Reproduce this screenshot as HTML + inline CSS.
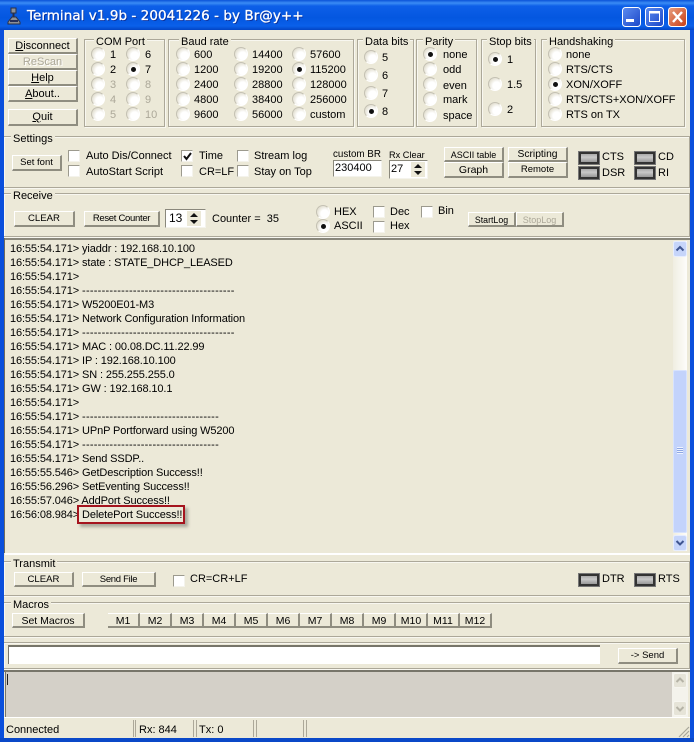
<!DOCTYPE html>
<html><head><meta charset="utf-8"><style>
html,body{margin:0;padding:0;background:#ece9d8}
#w{position:relative;width:694px;height:742px;overflow:hidden;background:#ece9d8;font:11px/14px "Liberation Sans",sans-serif;color:#000}
#w div,#w span{position:absolute;white-space:pre}
#w span{margin-top:1px}
.g{border:1px solid #aca899;box-shadow:inset 1px 1px 0 #f8f7f0,1px 1px 0 #f8f7f0}
.l{background:#ece9d8;padding:0 2px;line-height:12px;margin:1px 0 0 1px}
.b{background:#ece9d8;border-top:1px solid #fff;border-left:1px solid #fff;border-right:2px solid #8f8d80;border-bottom:2px solid #8f8d80;text-align:center;box-sizing:border-box;font-size:11px;line-height:12px;padding-top:1px}
.r{width:12px;height:12px;border-radius:50%;background:radial-gradient(circle at 65% 65%,#fff 35%,#e6e3d6 70%);border:1px solid #c4c1b3;border-bottom-color:#fff;border-right-color:#fff;margin:-7px 0 0 -7px}
.c:after{content:"";position:absolute;left:3.500px;top:3.500px;width:5px;height:5px;border-radius:50%;background:#111}
.x{width:10px;height:10px;background:#fff;border:1px solid #9c9a8e;border-bottom-color:#f4f3ec;border-right-color:#f4f3ec}
.d{color:#aca899}
.led{width:16px;height:8px;border:2px solid #333;outline:1px solid #777;background:linear-gradient(#aaa,#c9c9c9 40%,#999)}
.m{background:#ece9d8;border-top:1px solid #fff;border-right:2px solid #8f8d80;border-bottom:2px solid #8f8d80;box-sizing:border-box;text-align:center;top:613px;height:15px;width:32px;line-height:13px;font-size:10.5px;padding-top:1px}
.log{left:10px;letter-spacing:-.12px;margin-top:1px}
em{font-style:normal;letter-spacing:.25px}
</style></head><body><div id="w">

<!-- title -->
<div style="left:0;top:0;width:694px;height:30px;background:linear-gradient(#0a52d8 0,#3a8cf5 3px,#0d5fe8 6px,#0457e0 18px,#0a60ea 26px,#0344c4 30px)"></div>

<svg style="position:absolute;left:6px;top:6px" width="16" height="19" viewBox="0 0 16 19"><path d="M5 2h5v5H8v4h2l4 5v2H2v-2l4-5h1V7H5z" fill="#8c9098" stroke="#2a2f45"/><rect x="4" y="14" width="8" height="2" fill="#27305a"/></svg>
<div style="left:27px;top:7px;color:#fff;font:13.5px/18px 'DejaVu Sans',sans-serif;letter-spacing:.05px;-webkit-text-stroke:.3px #fff;text-shadow:1px 1px 0 #0a2f9a">Terminal v1.9b - 20041226 - by Br@y++</div>

<svg style="position:absolute;left:621px;top:6px" width="68" height="22" viewBox="0 0 68 22">
<defs><linearGradient id="a" x1="0" y1="0" x2="1" y2="1"><stop offset="0" stop-color="#5c8cf0"/><stop offset="1" stop-color="#1b47c8"/></linearGradient><linearGradient id="e" x1="0" y1="0" x2="1" y2="1"><stop offset="0" stop-color="#e8a080"/><stop offset="1" stop-color="#c83c14"/></linearGradient></defs>
<rect x="1.500" y="1.500" width="18" height="19" rx="3" fill="url(#a)" stroke="#fff"/><rect x="5" y="13" width="8" height="3" fill="#fff"/>
<rect x="24.500" y="1.500" width="18" height="19" rx="3" fill="url(#a)" stroke="#fff"/><rect x="28.500" y="5.500" width="10" height="10" fill="none" stroke="#fff"/><rect x="28" y="5" width="11" height="2.500" fill="#fff"/>
<rect x="47.500" y="1.500" width="18" height="19" rx="3" fill="url(#e)" stroke="#fff"/><path d="M52 6l9 10M61 6l-9 10" stroke="#fff" stroke-width="2.400"/></svg>

<!-- left buttons -->
<div class="b" style="left:8px;top:38px;width:70px;height:16px"><u>D</u>isconnect</div>
<div class="b d" style="left:8px;top:54px;width:70px;height:16px;text-shadow:1px 1px 0 #fff">ReScan</div>
<div class="b" style="left:8px;top:70px;width:70px;height:16px"><u>H</u>elp</div>
<div class="b" style="left:8px;top:86px;width:70px;height:16px"><u>A</u>bout..</div>
<div class="b" style="left:8px;top:109px;width:70px;height:17px"><u>Q</u>uit</div>

<!-- COM Port -->
<div class="g" style="left:84px;top:39px;width:79px;height:86px"></div><div class="l" style="left:93px;top:35px">COM Port</div>
<div class="r" style="left:98px;top:54px"></div><span style="left:110px;top:47px">1</span>
<div class="r" style="left:133px;top:54px"></div><span style="left:145px;top:47px">6</span>
<div class="r" style="left:98px;top:69px"></div><span style="left:110px;top:62px">2</span>
<div class="r c" style="left:133px;top:69px"></div><span style="left:145px;top:62px">7</span>
<div class="r" style="left:98px;top:84px"></div><span class="d" style="left:110px;top:77px">3</span>
<div class="r" style="left:133px;top:84px"></div><span class="d" style="left:145px;top:77px">8</span>
<div class="r" style="left:98px;top:99px"></div><span class="d" style="left:110px;top:92px">4</span>
<div class="r" style="left:133px;top:99px"></div><span class="d" style="left:145px;top:92px">9</span>
<div class="r" style="left:98px;top:114px"></div><span class="d" style="left:110px;top:107px">5</span>
<div class="r" style="left:133px;top:114px"></div><span class="d" style="left:145px;top:107px">10</span>

<!-- Baud -->
<div class="g" style="left:168px;top:39px;width:184px;height:86px"></div><div class="l" style="left:178px;top:35px">Baud rate</div>
<div class="r" style="left:183px;top:54px"></div><span style="left:194px;top:47px">600</span>
<div class="r" style="left:241px;top:54px"></div><span style="left:252px;top:47px">14400</span>
<div class="r" style="left:299px;top:54px"></div><span style="left:310px;top:47px">57600</span>
<div class="r" style="left:183px;top:69px"></div><span style="left:194px;top:62px">1200</span>
<div class="r" style="left:241px;top:69px"></div><span style="left:252px;top:62px">19200</span>
<div class="r c" style="left:299px;top:69px"></div><span style="left:310px;top:62px">115200</span>
<div class="r" style="left:183px;top:84px"></div><span style="left:194px;top:77px">2400</span>
<div class="r" style="left:241px;top:84px"></div><span style="left:252px;top:77px">28800</span>
<div class="r" style="left:299px;top:84px"></div><span style="left:310px;top:77px">128000</span>
<div class="r" style="left:183px;top:99px"></div><span style="left:194px;top:92px">4800</span>
<div class="r" style="left:241px;top:99px"></div><span style="left:252px;top:92px">38400</span>
<div class="r" style="left:299px;top:99px"></div><span style="left:310px;top:92px">256000</span>
<div class="r" style="left:183px;top:114px"></div><span style="left:194px;top:107px">9600</span>
<div class="r" style="left:241px;top:114px"></div><span style="left:252px;top:107px">56000</span>
<div class="r" style="left:299px;top:114px"></div><span style="left:310px;top:107px">custom</span>

<!-- Data bits -->
<div class="g" style="left:357px;top:39px;width:55px;height:86px"></div><div class="l" style="left:362px;top:35px">Data bits</div>
<div class="r" style="left:371px;top:57px"></div><span style="left:382px;top:50px">5</span>
<div class="r" style="left:371px;top:75px"></div><span style="left:382px;top:68px">6</span>
<div class="r" style="left:371px;top:93px"></div><span style="left:382px;top:86px">7</span>
<div class="r c" style="left:371px;top:111px"></div><span style="left:382px;top:104px">8</span>

<!-- Parity -->
<div class="g" style="left:416px;top:39px;width:59px;height:86px"></div><div class="l" style="left:422px;top:35px">Parity</div>
<div class="r c" style="left:430px;top:54px"></div><span style="left:443px;top:47px">none</span>
<div class="r" style="left:430px;top:69px"></div><span style="left:443px;top:62px">odd</span>
<div class="r" style="left:430px;top:84px"></div><span style="left:443px;top:78px">even</span>
<div class="r" style="left:430px;top:99px"></div><span style="left:443px;top:92px">mark</span>
<div class="r" style="left:430px;top:115px"></div><span style="left:443px;top:108px">space</span>

<!-- Stop bits -->
<div class="g" style="left:481px;top:39px;width:53px;height:86px"></div><div class="l" style="left:486px;top:35px">Stop bits</div>
<div class="r c" style="left:495px;top:59px"></div><span style="left:507px;top:52px">1</span>
<div class="r" style="left:495px;top:84px"></div><span style="left:507px;top:77px">1.5</span>
<div class="r" style="left:495px;top:109px"></div><span style="left:507px;top:102px">2</span>

<!-- Handshaking -->
<div class="g" style="left:541px;top:39px;width:142px;height:86px"></div><div class="l" style="left:546px;top:35px">Handshaking</div>
<div class="r" style="left:555px;top:54px"></div><span style="left:566px;top:47px">none</span>
<div class="r" style="left:555px;top:69px"></div><span style="left:566px;top:62px">RTS/CTS</span>
<div class="r c" style="left:555px;top:84px"></div><span style="left:566px;top:77px">XON/XOFF</span>
<div class="r" style="left:555px;top:99px"></div><span style="left:566px;top:92px">RTS/CTS+XON/XOFF</span>
<div class="r" style="left:555px;top:114px"></div><span style="left:566px;top:107px">RTS on TX</span>

<!-- Settings -->
<div class="g" style="left:3px;top:136px;width:685px;height:50px"></div><div class="l" style="left:10px;top:132px">Settings</div>
<div class="b" style="left:12px;top:155px;width:50px;height:16px;font-size:9.500px">Set font</div>
<div class="x" style="left:68px;top:150px"></div><span style="left:86px;top:148px">Auto Dis/Connect</span>
<div class="x" style="left:68px;top:165px"></div><span style="left:86px;top:164px">AutoStart Script</span>
<div class="x" style="left:181px;top:150px"></div>
<svg style="position:absolute;left:181px;top:150px" width="13" height="13"><path d="M3 6l2.500 3L10 3" fill="none" stroke="#111" stroke-width="2"/></svg>
<span style="left:199px;top:148px">Time</span>
<div class="x" style="left:181px;top:165px"></div><span style="left:199px;top:164px">CR=LF</span>
<div class="x" style="left:237px;top:150px"></div><span style="left:254px;top:148px">Stream log</span>
<div class="x" style="left:237px;top:165px"></div><span style="left:254px;top:164px">Stay on Top</span>
<span style="left:333px;top:147px;font-size:9.800px">custom BR</span>
<span style="left:389px;top:147px;font-size:9.200px">Rx Clear</span>
<div style="left:333px;top:160px;width:46px;height:15px;background:#fff;border:1px solid #8a887c;border-bottom-color:#f4f3ec;border-right-color:#f4f3ec;padding-left:1px">230400</div>
<div style="left:389px;top:160px;width:36px;height:17px;background:#fff;border:1px solid #8a887c;border-bottom-color:#f4f3ec;border-right-color:#f4f3ec;padding-left:1px;line-height:16px">27</div>
<svg style="position:absolute;left:411px;top:162px" width="14" height="15"><rect width="14" height="15" fill="#ece9d8"/><path d="M7 2l4 4H3zM7 13l4-4H3z" fill="#111"/></svg>
<div class="b" style="left:444px;top:147px;width:60px;height:15px;font-size:9px">ASCII table</div>
<div class="b" style="left:444px;top:162px;width:60px;height:16px;font-size:10.500px">Graph</div>
<div class="b" style="left:508px;top:147px;width:60px;height:15px;font-size:10.300px">Scripting</div>
<div class="b" style="left:508px;top:162px;width:60px;height:16px;font-size:9.500px">Remote</div>
<div class="led" style="left:579px;top:152px"></div><span style="left:602px;top:149px">CTS</span>
<div class="led" style="left:579px;top:167px"></div><span style="left:602px;top:165px">DSR</span>
<div class="led" style="left:635px;top:152px"></div><span style="left:658px;top:149px">CD</span>
<div class="led" style="left:635px;top:167px"></div><span style="left:658px;top:165px">RI</span>

<!-- Receive -->
<div class="g" style="left:3px;top:193px;width:685px;height:42px"></div><div class="l" style="left:10px;top:189px">Receive</div>
<div class="b" style="left:14px;top:211px;width:61px;height:16px;font-size:9.600px">CLEAR</div>
<div class="b" style="left:84px;top:211px;width:76px;height:16px;font-size:9.500px;letter-spacing:-.3px">Reset Counter</div>
<div style="left:165px;top:209px;width:36px;height:17px;background:#fff;border:1px solid #8a887c;border-bottom-color:#f4f3ec;border-right-color:#f4f3ec;padding-left:3px;line-height:16px;font-size:12px">13</div>
<svg style="position:absolute;left:187px;top:211px" width="14" height="15"><rect width="14" height="15" fill="#ece9d8"/><path d="M7 2l4 4H3zM7 13l4-4H3z" fill="#111"/></svg>
<span style="left:212px;top:211px">Counter =  35</span>
<div class="r" style="left:323px;top:212px"></div><span style="left:334px;top:204px">HEX</span>
<div class="r c" style="left:323px;top:226px"></div><span style="left:334px;top:218px">ASCII</span>
<div class="x" style="left:373px;top:206px"></div><span style="left:390px;top:204px">Dec</span>
<div class="x" style="left:373px;top:221px"></div><span style="left:390px;top:218px">Hex</span>
<div class="x" style="left:421px;top:206px"></div><span style="left:438px;top:203px">Bin</span>
<div class="b" style="left:468px;top:212px;width:48px;height:15px;font-size:8.800px">StartLog</div>
<div class="b d" style="left:516px;top:212px;width:48px;height:15px;font-size:9px">StopLog</div>

<!-- Receive log -->
<div style="left:4px;top:238px;width:686px;height:2px;background:#8a887c"></div>
<div style="left:4px;top:238px;width:1px;height:315px;background:#6d6b60"></div>
<div style="left:5px;top:553px;width:685px;height:2px;background:#fff"></div>
<div class="log" style="top:241px">16:55:54.171&gt; yiaddr : 192.168.10.100</div>
<div class="log" style="top:255px">16:55:54.171&gt; state : STATE_DHCP_LEASED</div>
<div class="log" style="top:269px">16:55:54.171&gt;</div>
<div class="log" style="top:283px">16:55:54.171&gt; <em>---------------------------------------</em></div>
<div class="log" style="top:297px">16:55:54.171&gt; W5200E01-M3</div>
<div class="log" style="top:311px">16:55:54.171&gt; Network Configuration Information</div>
<div class="log" style="top:325px">16:55:54.171&gt; <em>---------------------------------------</em></div>
<div class="log" style="top:339px">16:55:54.171&gt; MAC : 00.08.DC.11.22.99</div>
<div class="log" style="top:353px">16:55:54.171&gt; IP : 192.168.10.100</div>
<div class="log" style="top:367px">16:55:54.171&gt; SN : 255.255.255.0</div>
<div class="log" style="top:381px">16:55:54.171&gt; GW : 192.168.10.1</div>
<div class="log" style="top:395px">16:55:54.171&gt;</div>
<div class="log" style="top:409px">16:55:54.171&gt; <em>-----------------------------------</em></div>
<div class="log" style="top:423px">16:55:54.171&gt; UPnP Portforward using W5200</div>
<div class="log" style="top:437px">16:55:54.171&gt; <em>-----------------------------------</em></div>
<div class="log" style="top:451px">16:55:54.171&gt; Send SSDP..</div>
<div class="log" style="top:465px">16:55:55.546&gt; GetDescription Success!!</div>
<div class="log" style="top:479px">16:55:56.296&gt; SetEventing Success!!</div>
<div class="log" style="top:493px">16:55:57.046&gt; AddPort Success!!</div>
<div class="log" style="top:507px">16:56:08.984&gt; DeletePort Success!!</div>
<div style="left:77px;top:505px;width:104px;height:15px;border:2px solid #a5141e;box-shadow:3px 3px 3px #aaa89c"></div>

<!-- log scrollbar -->
<div style="left:673px;top:241px;width:14px;height:310px;background:linear-gradient(90deg,#f0eee2,#fdfdfa)"></div>
<div style="left:673px;top:370px;width:14px;height:163px;background:#c3d3fb;border-radius:2px;box-shadow:inset 0 0 0 1px #d8e3fd"></div>
<div style="left:677px;top:447px;width:6px;height:7px;background:repeating-linear-gradient(#eef3ff 0 1px,#8fa8e4 1px 2px)"></div>
<svg style="position:absolute;left:673px;top:241px" width="14" height="16"><rect x=".5" y=".5" width="13" height="15" rx="2" fill="#c6d5fa" stroke="#e6edff"/><path d="M3.500 9.500L7 6l3.500 3.500" fill="none" stroke="#3f5590" stroke-width="2"/></svg>
<svg style="position:absolute;left:673px;top:535px" width="14" height="16"><rect x=".5" y=".5" width="13" height="15" rx="2" fill="#c6d5fa" stroke="#e6edff"/><path d="M3.500 6L7 9.500 10.500 6" fill="none" stroke="#3f5590" stroke-width="2"/></svg>

<!-- Transmit -->
<div class="g" style="left:3px;top:561px;width:685px;height:33px"></div><div class="l" style="left:10px;top:557px">Transmit</div>
<div class="b" style="left:14px;top:572px;width:60px;height:15px;font-size:9.600px">CLEAR</div>
<div class="b" style="left:82px;top:572px;width:74px;height:15px;font-size:9.500px;letter-spacing:-.3px">Send File</div>
<div class="x" style="left:173px;top:575px"></div><span style="left:190px;top:571px">CR=CR+LF</span>
<div class="led" style="left:579px;top:574px"></div><span style="left:602px;top:571px">DTR</span>
<div class="led" style="left:635px;top:574px"></div><span style="left:658px;top:571px">RTS</span>

<!-- Macros -->
<div class="g" style="left:3px;top:602px;width:685px;height:33px"></div><div class="l" style="left:10px;top:598px">Macros</div>
<div class="b" style="left:12px;top:613px;width:73px;height:15px;font-size:10.500px">Set Macros</div>
<div class="m" style="left:108px">M1</div><div class="m" style="left:140px">M2</div><div class="m" style="left:172px">M3</div><div class="m" style="left:204px">M4</div><div class="m" style="left:236px">M5</div><div class="m" style="left:268px">M6</div><div class="m" style="left:300px">M7</div><div class="m" style="left:332px">M8</div><div class="m" style="left:364px">M9</div><div class="m" style="left:396px">M10</div><div class="m" style="left:428px">M11</div><div class="m" style="left:460px">M12</div>

<!-- Input -->
<div class="g" style="left:3px;top:642px;width:685px;height:25px"></div>
<div style="left:8px;top:645px;width:592px;height:19px;background:#fff;border-top:2px solid #77756a;border-left:1px solid #77756a;box-sizing:border-box"></div>
<div class="b" style="left:618px;top:648px;width:60px;height:16px;font-size:9.500px">-&gt; Send</div>

<!-- Memo -->
<div style="left:4px;top:670px;width:686px;height:2px;background:#77756a"></div>
<div style="left:5px;top:672px;width:667px;height:45px;background:#d4d0c8;border-left:1px solid #77756a"></div>
<div style="left:7px;top:674px;width:1px;height:11px;background:#222"></div>
<div style="left:672px;top:672px;width:16px;height:45px;background:#f4f3ec"></div>
<svg style="position:absolute;left:673px;top:673px" width="14" height="15"><rect x=".5" y=".5" width="13" height="14" rx="2" fill="#e6e4d8" stroke="#f7f6f0"/><path d="M3.500 9L7 5.500 10.500 9" fill="none" stroke="#b5b3a6" stroke-width="2"/></svg>
<svg style="position:absolute;left:673px;top:701px" width="14" height="15"><rect x=".5" y=".5" width="13" height="14" rx="2" fill="#e6e4d8" stroke="#f7f6f0"/><path d="M3.500 6L7 9.500 10.500 6" fill="none" stroke="#b5b3a6" stroke-width="2"/></svg>
<div style="left:4px;top:717px;width:686px;height:1px;background:#fff"></div>

<!-- Status -->
<div style="left:4px;top:720px;width:129px;height:17px;box-shadow:1px 0 0 #aca899"></div><span style="left:6px;top:722px">Connected</span>
<div style="left:136px;top:720px;width:57px;height:17px;box-shadow:-1px 0 0 #aca899,1px 0 0 #aca899"></div><span style="left:139px;top:722px">Rx: 844</span>
<div style="left:197px;top:720px;width:56px;height:17px;box-shadow:-1px 0 0 #aca899,1px 0 0 #aca899"></div><span style="left:199px;top:722px">Tx: 0</span>
<div style="left:257px;top:720px;width:46px;height:17px;box-shadow:-1px 0 0 #aca899,1px 0 0 #aca899"></div>
<div style="left:306px;top:720px;width:1px;height:17px;background:#aca899"></div>
<svg style="position:absolute;left:678px;top:726px" width="12" height="12"><path d="M11 1L1 11M11 5l-6 6M11 9l-2 2" stroke="#a8a699" stroke-width="1.200"/></svg>

<!-- frame -->
<div style="left:0;top:30px;width:4px;height:712px;background:#0a4fdc"></div>
<div style="left:690px;top:30px;width:4px;height:712px;background:#0a4fdc"></div>
<div style="left:0;top:738px;width:694px;height:4px;background:#0a48c8"></div>
</div></body></html>
